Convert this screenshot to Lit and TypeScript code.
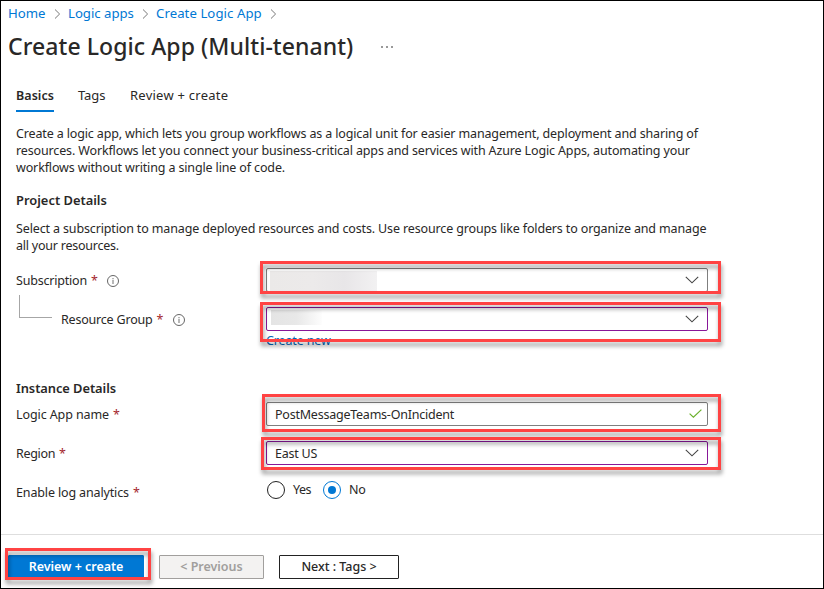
import { LitElement, html, css, nothing } from "lit";
import { customElement } from "lit/decorators.js";

const sep = () => html`<svg class="sep" width="7" height="10" viewBox="0 0 7 10"><path d="M1 .5 5.6 5 1 9.5" fill="none" stroke="#777" stroke-width="1"/></svg>`;
const chevron = () => html`<svg class="chev" width="14" height="8" viewBox="0 0 14 8"><path d="M.8 .8 7 6.8 13.2 .8" fill="none" stroke="#444" stroke-width="1.1"/></svg>`;
const check = () => html`<svg class="check" width="13" height="9" viewBox="0 0 13 9"><path d="M.6 4.6 4.4 8.2 12.4 .6" fill="none" stroke="#6bb02c" stroke-width="1.2"/></svg>`;
const info = () => html`<svg class="info" width="12" height="12" viewBox="0 0 12 12"><circle cx="6" cy="6" r="5.5" fill="none" stroke="#666" stroke-width="1"/><path d="M6 5v4M6 3v1.2" stroke="#888" stroke-width="1.2"/></svg>`;
const label = (text: string, cls: string, hint = false) =>
  html`<div class="label ${cls}"><span>${text}</span><span class="req">*</span>${hint ? info() : nothing}</div>`;

@customElement("app-root")
export class AppRoot extends LitElement {
  static styles = css`
    :host { display: block; position: relative; box-sizing: border-box; width: 824px; height: 589px; overflow: hidden; background: #fff; border: 1px solid #000; font: 12.5px/17px "Noto Sans", "Open Sans", sans-serif; letter-spacing: -.14px; color: #292827; }
    * { box-sizing: border-box; }
    svg { display: block; flex: none; }
    span, h1, h2 { white-space: nowrap; }
    .crumbs { display: flex; align-items: center; height: 24px; padding-left: 7px; color: #0078d4; font-size: 13.2px; letter-spacing: 0; }
    .c1 { width: 38px; } .c2 { width: 66px; letter-spacing: -.02px; } .c3 { width: 106px; letter-spacing: .06px; }
    .sep { margin: 2px 7px 0 8px; }
    .title { display: flex; align-items: center; height: 44px; padding-left: 7px; }
    h1 { margin: -2px 0 0; font-size: 23px; font-weight: 550; line-height: 32px; width: 373px; letter-spacing: .07px; }
    .dots { display: flex; gap: 3px; margin-top: -1px; }
    .dots i { width: 2px; height: 2px; background: #999; }
    .tabs { display: flex; height: 43px; padding-left: 15px; align-items: flex-end; font-size: 13px; letter-spacing: .25px; }
    .tab { height: 27px; padding-top: 2px; }
    .tab.on { width: 38px; margin-right: 24px; border-bottom: 2px solid #0078d4; font-weight: 600; font-size: 12.5px; letter-spacing: .05px; }
    .tab.two { width: 52px; letter-spacing: -.1px; }
    .para { padding-left: 15px; display: flex; flex-direction: column; height: 51px; margin-top: 13px; }
    .para.two { height: 34px; margin-top: 11px; }
    .tight { letter-spacing: -.23px; }
    h2 { margin: 16px 0 0 15px; font-size: 12.9px; line-height: 17px; font-weight: 600; letter-spacing: 0; }
    h2.instance { margin-top: 31px; letter-spacing: -.07px; }
    .form { display: flex; flex-direction: column; margin-top: 6px; }
    .form.instance { margin-top: -3px; }
    .row { display: flex; align-items: center; height: 39px; padding-left: 15px; }
    .row.choice { margin-top: -2px; }
    .label { display: flex; width: 250px; flex: none; align-items: center; letter-spacing: -.2px; padding-top: 1px; }
    .label.indent { padding-left: 12px; width: 217px; }
    .label.name { letter-spacing: -.1px; }
    .label.region { letter-spacing: -.33px; }
    .label.log { letter-spacing: -.14px; padding-top: 5px; }
    .req { color: #a4262c; margin-left: 4px; width: 6px; font-size: 12.5px; }
    .info { margin: 1px 0 0 10px; }
    .branch { height: 23px; border: solid #a6a6a6; border-width: 0 0 1px 1px; margin: -25px -3px 0 3px; flex: none; width: 33px; }
    .field { width: 442px; flex: none; height: 24px; border: 1px solid #7f7f7f; border-radius: 2px; display: flex; align-items: center; padding: 0 8px; background: #fff; letter-spacing: -.23px; }
    .field span { padding-top: 1px; }
    .field.set { border-color: #881798; }
    .chev { margin: 0 0 0 auto; }
    .check { margin: 0 -3px 0 auto; }
    .mask { height: 20px; width: 107px; margin: 2px 0 0 -5px; background: linear-gradient(90deg, #ebe9e8, #eceaea 40%, #e8e6e8 70%, #f2f1f2); }
    .mask.short { width: 51px; height: 15px; margin: -3px 0 0 -4px; background: linear-gradient(90deg, #e4e4e4, #e8e8e8 50%, #fdfdfd); }
    .link { height: 17px; padding-left: 265px; color: #0065b8; margin-top: -6px; }
    .radio { width: 18px; height: 18px; flex: none; border: 1px solid #222; border-radius: 50%; display: flex; align-items: center; justify-content: center; margin: 0 8px 0 1px; }
    .radio.on { border-color: #0078d4; margin-left: 13px; }
    .radio.on i { width: 8px; height: 8px; border-radius: 50%; background: #0078d4; }
    .yes { width: 17px; letter-spacing: -.5px; }
    .no { letter-spacing: -.3px; }
    .footer { display: flex; align-items: center; border-top: 1px solid #dedede; height: 54px; margin-top: 25px; padding: 11px 0 0 7px; gap: 15px; }
    .btn { height: 24px; display: flex; align-items: center; justify-content: center; border: 1px solid #222; border-radius: 1px; font-weight: 500; width: 120px; font-size: 12.5px; letter-spacing: -.03px; padding-bottom: 1px; }
    .btn.primary { width: 136px; background: #0078d4; border-color: #0078d4; color: #fff; font-weight: 600; }
    .btn.off { width: 105px; background: #f3f2f1; border-color: #a19f9d; color: #a19f9d; font-weight: 600; }
    .mark { position: absolute; border: 3px solid #ff4343; filter: drop-shadow(1px 4px 2px rgba(0,0,0,.4)); pointer-events: none; }
    .m1 { left: 259px; top: 260px; width: 461px; height: 33px; }
    .m2 { left: 259px; top: 301px; width: 461px; height: 40px; }
    .m3 { left: 261px; top: 393px; width: 459px; height: 38px; }
    .m4 { left: 260px; top: 436px; width: 460px; height: 33px; }
    .m5 { left: 4px; top: 547px; width: 146px; height: 32px; }
  `;
  render() {
    return html`
      <nav class="crumbs"><span class="c1">Home</span>${sep()}<span class="c2">Logic apps</span>${sep()}<span class="c3">Create Logic App</span>${sep()}</nav>
      <div class="title"><h1>Create Logic App (Multi-tenant)</h1><div class="dots"><i></i><i></i><i></i></div></div>
      <div class="tabs"><span class="tab on">Basics</span><span class="tab two">Tags</span><span class="tab">Review + create</span></div>
      <div class="para">
        <span>Create a logic app, which lets you group workflows as a logical unit for easier management, deployment and sharing of</span>
        <span>resources. Workflows let you connect your business-critical apps and services with Azure Logic Apps, automating your</span>
        <span>workflows without writing a single line of code.</span>
      </div>
      <h2>Project Details</h2>
      <div class="para two">
        <span>Select a subscription to manage deployed resources and costs. Use resource groups like folders to organize and manage</span>
        <span class="tight">all your resources.</span>
      </div>
      <div class="form">
        <div class="row">${label("Subscription", "", true)}<div class="field"><div class="mask"></div>${chevron()}</div></div>
        <div class="row"><div class="branch"></div>${label("Resource Group", "indent", true)}<div class="field set"><div class="mask short"></div>${chevron()}</div></div>
        <div class="link">Create new</div>
      </div>
      <h2 class="instance">Instance Details</h2>
      <div class="form instance">
        <div class="row">${label("Logic App name", "name")}<div class="field"><span>PostMessageTeams-OnIncident</span>${check()}</div></div>
        <div class="row">${label("Region", "region")}<div class="field set"><span>East US</span>${chevron()}</div></div>
        <div class="row choice">${label("Enable log analytics", "log")}<div class="radio"></div><span class="yes">Yes</span><div class="radio on"><i></i></div><span class="no">No</span></div>
      </div>
      <div class="footer"><div class="btn primary">Review + create</div><div class="btn off">&lt; Previous</div><div class="btn">Next : Tags &gt;</div></div>
      <div class="mark m1"></div><div class="mark m2"></div><div class="mark m3"></div><div class="mark m4"></div><div class="mark m5"></div>`;
  }
}
